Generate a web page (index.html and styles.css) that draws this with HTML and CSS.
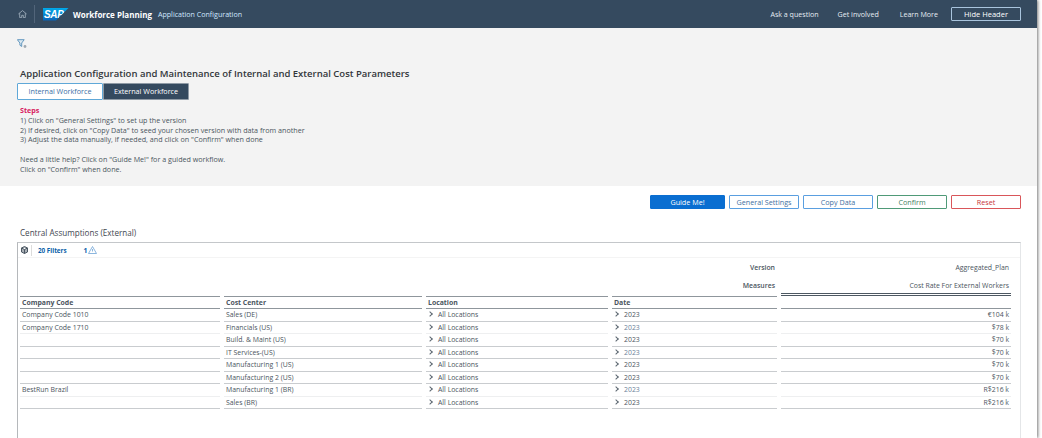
FILE: index.html
```html
<!DOCTYPE html>
<html lang="en">
<head>
    <meta charset="UTF-8">
    <title>Workforce Planning - Application Configuration</title>
    <link rel="stylesheet" href="styles.css">
</head>
<body>
<div class="page">
    <header class="shell">
        <svg class="home" width="9" height="8" viewBox="0 0 9 8"><path d="M.4 4 4.500.6 8.600 4M1.700 3.200V7.600h2V5.300h1.600v2.300h2V3.200" fill="none" stroke="#a7b5c3" stroke-width=".8"/></svg>
        <span class="shell-sep"></span>
        <div class="logo">SAP</div>
        <span class="app-name">Workforce Planning</span>
        <span class="app-sub">Application Configuration</span>
        <nav class="shell-links">
            <a class="link-ask">Ask a question</a>
            <a class="link-get">Get involved</a>
            <a class="link-learn">Learn More</a>
            <button class="hide-btn">Hide Header</button>
        </nav>
    </header>

    <section class="intro">
        <svg class="filter-icon" width="10" height="10" viewBox="0 0 10 10"><path d="M.4.700h6.800L4.700 4v3.500L2.900 6.200V4z" fill="#dce8f0" stroke="#6398bf" stroke-width="1"/><circle cx="8" cy="7.500" r="1.400" fill="#9fa9b2"/></svg>
        <h1 class="title">Application Configuration and Maintenance of Internal and External Cost Parameters</h1>
        <div class="tabs">
            <button class="tab tab-on">Internal Workforce</button>
            <button class="tab tab-dark">External Workforce</button>
        </div>
        <div class="steps">
            <div class="steps-head">Steps</div>
            <div>1) Click on "General Settings" to set up the version</div>
            <div>2) If desired, click on "Copy Data" to seed your chosen version with data from another</div>
            <div>3) Adjust the data manually, if needed, and click on "Confirm" when done</div>
            <div class="gap-line">Need a little help? Click on "Guide Me!" for a guided workflow.</div>
            <div>Click on "Confirm" when done.</div>
        </div>
    </section>

    <div class="actions">
        <button class="btn btn-main">Guide Me!</button>
        <button class="btn btn-blue">General Settings</button>
        <button class="btn btn-blue">Copy Data</button>
        <button class="btn btn-green">Confirm</button>
        <button class="btn btn-red">Reset</button>
    </div>

    <h2 class="table-title">Central Assumptions (External)</h2>

    <div class="table-box">
        <div class="toolbar">
            <svg class="tool-icon" width="7" height="8" viewBox="0 0 7 8"><path d="M3.500.5 6.500 2v4L3.500 7.500.5 6V2zM.5 2l3 1.500L6.500 2M3.500 3.500v4" fill="#aab0b6" stroke="#4b5763" stroke-width="1"/></svg>
            <span class="tool-sep"></span>
            <span class="tool-filters">20 Filters</span>
            <span class="tool-count">1</span>
            <svg class="warn" width="9" height="8" viewBox="0 0 9 8"><path d="M4.500.5 8.500 7.500H.5zM4.500 3v2.500" fill="none" stroke="#6fa3d6" stroke-width=".8"/></svg>
        </div>

        <div class="row meta">
            <div class="meta-label">Version</div>
            <div class="meta-value">Aggregated_Plan</div>
        </div>
        <div class="row meta meta-last">
            <div class="meta-label">Measures</div>
            <div class="meta-value">Cost Rate For External Workers</div>
        </div>

        <div class="row head">
            <div>Company Code</div>
            <div>Cost Center</div>
            <div>Location</div>
            <div>Date</div>
            <div class="num"></div>
        </div>
        <div class="row">
            <div>Company Code 1010</div>
            <div>Sales (DE)</div>
            <div><span class="chev"></span>All Locations</div>
            <div><span class="chev"></span>2023</div>
            <div class="num">€104 k</div>
        </div>
        <div class="row soft">
            <div>Company Code 1710</div>
            <div>Financials (US)</div>
            <div><span class="chev"></span>All Locations</div>
            <div class="date-blue"><span class="chev"></span>2023</div>
            <div class="num">$78 k</div>
        </div>
        <div class="row">
            <div></div>
            <div>Build. &amp; Maint (US)</div>
            <div><span class="chev"></span>All Locations</div>
            <div><span class="chev"></span>2023</div>
            <div class="num">$70 k</div>
        </div>
        <div class="row">
            <div></div>
            <div>IT Services-(US)</div>
            <div><span class="chev"></span>All Locations</div>
            <div class="date-blue"><span class="chev"></span>2023</div>
            <div class="num">$70 k</div>
        </div>
        <div class="row">
            <div></div>
            <div>Manufacturing 1 (US)</div>
            <div><span class="chev"></span>All Locations</div>
            <div><span class="chev"></span>2023</div>
            <div class="num">$70 k</div>
        </div>
        <div class="row">
            <div></div>
            <div>Manufacturing 2 (US)</div>
            <div><span class="chev"></span>All Locations</div>
            <div><span class="chev"></span>2023</div>
            <div class="num">$70 k</div>
        </div>
        <div class="row soft">
            <div>BestRun Brazil</div>
            <div>Manufacturing 1 (BR)</div>
            <div><span class="chev"></span>All Locations</div>
            <div class="date-blue"><span class="chev"></span>2023</div>
            <div class="num">R$216 k</div>
        </div>
        <div class="row">
            <div></div>
            <div>Sales (BR)</div>
            <div><span class="chev"></span>All Locations</div>
            <div><span class="chev"></span>2023</div>
            <div class="num">R$216 k</div>
        </div>
    </div>
</div>
</body>
</html>
```

FILE: styles.css
```css
* {
    box-sizing: border-box;
    font-family: "Open Sans", "Liberation Sans", sans-serif;
}
html, body {
    margin: 0;
    height: 438px;
    overflow: hidden;
    background: #fff;
}
button {
    cursor: pointer;
    padding: 0;
}
.page {
    width: 1037px;
    height: 438px;
    background: #fff;
    box-shadow: 1px 0 3px #777;
    overflow: hidden;
}

/* shell bar */
.shell {
    height: 28px;
    background: #354a5f;
    display: flex;
    align-items: center;
    color: #fff;
    font-size: 7.1px;
}
.home {
    margin-left: 18px;
}
.shell-sep {
    width: 1px;
    height: 18px;
    background: #52657a;
    margin: 0 8px 0 7px;
}
.logo {
    width: 26px;
    height: 13px;
    background: linear-gradient(#00a9ea, #0a62b8);
    clip-path: polygon(0 0, 100% 0, 50% 100%, 0 100%);
    color: #fff;
    font-family: "Liberation Sans", sans-serif;
    font-weight: bold;
    font-style: italic;
    font-size: 10px;
    line-height: 13px;
    padding-left: 1px;
    letter-spacing: -.3px;
}
.app-name {
    margin-left: 4px;
    font-weight: 700;
    font-size: 8px;
}
.app-sub {
    margin-left: 6px;
    color: #d1e8ff;
    font-size: 7.1px;
}
.shell-links {
    margin-left: auto;
    margin-right: 16px;
    display: flex;
    align-items: center;
    color: #e6edf4;
}
.link-get {
    margin-left: 19px;
}
.link-learn {
    margin-left: 21px;
}
.hide-btn {
    margin-left: 13px;
    width: 70px;
    height: 14px;
    background: transparent;
    border: 1px solid #a9c4dd;
    border-radius: 1px;
    color: #fff;
    font-size: 7.5px;
}

/* grey intro area */
.intro {
    height: 158px;
    background: #f3f3f3;
    padding: 11px 0 0 17px;
    color: #32363a;
}
.filter-icon {
    display: block;
}
.title {
    margin: 18px 0 0 3px;
    font-size: 9.5px;
    line-height: 13px;
    font-weight: 600;
    color: #32363a;
}
.tabs {
    display: flex;
    margin-top: 3px;
}
.tab {
    width: 86px;
    height: 17px;
    font-size: 7.2px;
    line-height: 13px;
    border-radius: 1px;
}
.tab-on {
    background: #fff;
    color: #3a6ea5;
    border: 1px solid #5fa8d8;
}
.tab-dark {
    background: #354a5f;
    color: #fff;
    border: 1px solid #8f9aa5;
}
.steps {
    margin: 6px 0 0 3px;
    font-size: 7.170px;
    line-height: 9.800px;
    color: #4b5560;
}
.steps-head {
    color: #d81b60;
    font-weight: 700;
}
.gap-line {
    margin-top: 9.800px;
}

/* action buttons */
.actions {
    display: flex;
    justify-content: flex-end;
    gap: 4px;
    padding: 9px 16px 0 0;
}
.btn {
    width: 70px;
    height: 14px;
    background: #fff;
    font-size: 7.2px;
    border-radius: 1px;
    border: 1px solid #ccc;
}
.btn-main {
    width: 75px;
    background: #0a6ed1;
    border-color: #0a6ed1;
    color: #fff;
}
.btn-blue {
    border-color: #5a9fe0;
    color: #3f6f9f;
}
.btn-green {
    border-color: #4f9a78;
    color: #3f7f5f;
}
.btn-red {
    border-color: #d9565a;
    color: #c8343a;
}

.table-title {
    margin: 18px 0 0 20px;
    font-size: 8.1px;
    line-height: 12px;
    font-weight: 400;
    color: #3f4750;
}

/* table */
.table-box {
    margin: 3px 0 0 17px;
    width: 1004px;
    height: 210px;
    border: 1px solid #e4e6e8;
    border-top-color: #c4c7ca;
    border-left: 1px solid #b5b8bb;
    padding-left: 2px;
    font-size: 6.9px;
    color: #4b5560;
}
.toolbar {
    height: 15px;
    margin-left: -2px;
    padding-left: 3px;
    display: flex;
    align-items: center;
    border-bottom: 1px solid #f4f4f4;
}
.tool-sep {
    width: 1px;
    height: 11px;
    background: #dcdcdc;
    margin: 0 6px 0 3px;
}
.tool-filters {
    color: #0a5ea8;
    font-weight: 700;
    font-size: 6.3px;
}
.tool-count {
    color: #0a5ea8;
    font-weight: 700;
    margin-left: 17px;
}
.row {
    display: grid;
    grid-template-columns: 200px 198px 182px 165px 230px;
    column-gap: 4px;
    height: 12.5px;
    line-height: 11.5px;
}
.row > div {
    padding-left: 2px;
    border-bottom: 1px solid #c9cccf;
    white-space: nowrap;
    overflow: hidden;
}
.row.soft > div {
    border-bottom-color: #eeeff0;
}
.row > .num {
    text-align: right;
    padding-right: 2px;
}
.row.meta {
    height: 18px;
    line-height: 18px;
    margin-top: 1px;
}
.row.meta > div {
    border-bottom: 0;
}
.row > .meta-label {
    grid-column: 4;
    text-align: right;
    font-weight: 600;
    padding-right: 2px;
}
.row > .meta-value {
    grid-column: 5;
    text-align: right;
    padding-right: 2px;
}
.row.meta-last {
    line-height: 16px;
}
.row.meta-last > .meta-value {
    border-bottom: 3px double #4d5862;
}
.head {
    height: 13px;
    font-weight: 700;
}
.row.head > div {
    border-top: 1px solid #8f969c;
    border-bottom-color: #8f969c;
}
.row.head > .num {
    border-top: 0;
}
.date-blue {
    color: #6b8299;
}
.chev {
    display: inline-block;
    width: 4px;
    height: 4px;
    margin: 0 6px 0 0;
    border-top: 1px solid #5b6670;
    border-right: 1px solid #5b6670;
    transform: rotate(45deg);
    vertical-align: 1px;
}
```
